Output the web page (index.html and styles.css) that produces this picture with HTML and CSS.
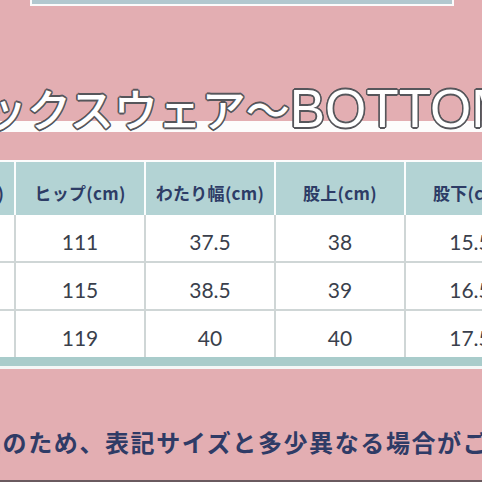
FILE: index.html
```html
<!DOCTYPE html>
<html lang="ja">
<head>
<meta charset="utf-8">
<link rel="stylesheet" href="styles.css">
</head>
<body>
<div class="page">
  <div class="topbox"></div>
  <h1 class="title"><span class="jp">ックスウェア〜</span><span class="en">BOTTOM</span></h1>
  <div class="sizetable">
    <div class="thead">
      <div class="th">ウエスト(cm)</div>
      <div class="th">ヒップ(cm)</div>
      <div class="th">わたり幅(cm)</div>
      <div class="th">股上(cm)</div>
      <div class="th">股下(cm)</div>
    </div>
    <div class="tbody">
      <div class="td">68</div><div class="td">111</div><div class="td">37.5</div><div class="td">38</div><div class="td">15.5</div>
      <div class="td">72</div><div class="td">115</div><div class="td">38.5</div><div class="td">39</div><div class="td">16.5</div>
      <div class="td">76</div><div class="td">119</div><div class="td">40</div><div class="td">40</div><div class="td">17.5</div>
    </div>
    <div class="tfoot"></div>
  </div>
  <p class="note">品のため、表記サイズと多少異なる場合がご</p>
  <div class="bottomline"></div>
</div>
</body>
</html>
```

FILE: styles.css
```css
html, body {
  margin: 0;
  padding: 0;
}
body {
  width: 482px;
  height: 482px;
  overflow: hidden;
  background: #e3aeb2;
}
.page {
  width: 482px;
  height: 482px;
  display: flex;
  flex-direction: column;
  overflow: hidden;
  background: #e3aeb2;
}
.topbox {
  margin-left: 30px;
  width: 420px;
  height: 4px;
  background: #b2c8cf;
  border: 2px solid #fbfbfb;
  border-top: 0;
  flex: none;
}
.title {
  margin: 64px 0 0 -17px;
  padding-top: 5px;
  height: 61px;
  line-height: 66px;
  white-space: nowrap;
  font-weight: 400;
  color: #ffffff;
  background: linear-gradient(to bottom, transparent 51px, #fdfcfc 51px, #fdfcfc 62px, transparent 62px);
  text-shadow:
    1.6px 0 0 #56565b, -1.6px 0 0 #56565b, 0 1.6px 0 #56565b, 0 -1.6px 0 #56565b,
    1.2px 1.2px 0 #56565b, -1.2px -1.2px 0 #56565b, 1.2px -1.2px 0 #56565b, -1.2px 1.2px 0 #56565b;
  flex: none;
}
.title .jp {
  font-family: "Noto Sans CJK JP", sans-serif;
  font-weight: 500;
  font-size: 44px;
}
.title .en {
  font-family: "Liberation Sans", Arial, sans-serif;
  font-size: 53px;
}
.sizetable {
  margin: 24px 0 0 -114px;
  width: 648px;
  flex: none;
  background: #fdfdfd;
  padding-top: 2px;
}
.thead {
  display: grid;
  grid-template-columns: repeat(5, 128px);
  column-gap: 2px;
  background: #fbfdfd;
}
.th {
  height: 53px;
  background: #b3d3d4;
  display: flex;
  align-items: center;
  justify-content: center;
  padding-top: 7px;
  box-sizing: border-box;
  font-family: "Noto Sans CJK JP", sans-serif;
  font-weight: 700;
  font-size: 17px;
  color: #2d3c66;
  letter-spacing: 0.3px;
}
.tbody {
  display: grid;
  grid-template-columns: repeat(5, 128px);
  grid-auto-rows: 46px;
  gap: 2px;
  background: #cfd6d6;
}
.td {
  background: #ffffff;
  display: flex;
  align-items: center;
  justify-content: center;
  padding-top: 6px;
  box-sizing: border-box;
  font-family: Lato, "Open Sans", sans-serif;
  font-size: 21px;
  color: #3a3f4c;
}
.tfoot {
  height: 9px;
  background: #a9cccb;
  border-bottom: 3px solid #f4f7f7;
}
.note {
  margin: 58px 0 0 -23px;
  height: 30px;
  line-height: 30px;
  white-space: nowrap;
  font-family: "Noto Sans CJK JP", sans-serif;
  font-weight: 700;
  font-size: 24px;
  letter-spacing: 1.6px;
  color: #2f3b66;
  flex: none;
}
.bottomline {
  margin-top: auto;
  height: 2px;
  background: #6a5a5f;
  flex: none;
}
```
